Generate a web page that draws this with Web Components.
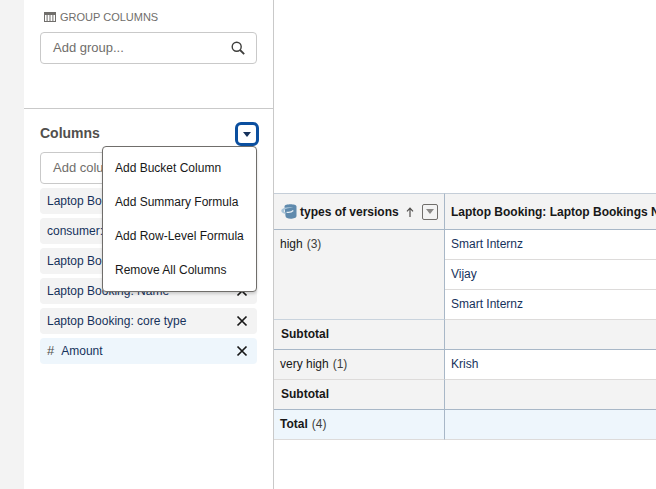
<!DOCTYPE html>
<html>
<head>
<meta charset="utf-8">
<title>Report builder</title>
<style>
  html, body { margin: 0; height: 100%; overflow: hidden; }
  body { font-family: "Liberation Sans", Arial, sans-serif; font-size: 12px; color: #181818; background: #f3f3f3; }
  #page { display: flex; height: 489px; width: 656px; overflow: hidden; }
</style>
</head>
<body>
<div id="page">
  <side-panel>
    <search-box placeholder="Add group..."></search-box>
  </side-panel>
  <report-table></report-table>
</div>

<script>
class SearchBox extends HTMLElement {
  constructor() {
    super();
    this.attachShadow({ mode: 'open' });
    this.shadowRoot.innerHTML = `
    <style>
      :host {
        display: flex;
        align-items: center;
        justify-content: space-between;
        height: 32px;
        box-sizing: border-box;
        padding: 0 11px 0 12px;
        background: #fff;
        border: 1px solid #c9c9c9;
        border-radius: 4px;
        color: #706e6b;
        font-size: 13px;
      }
      span { margin-top: -1px; }
      svg { width: 14px; height: 14px; display: block; }
    </style>
    <span>${this.getAttribute('placeholder')}</span>
    <svg viewBox="0 0 14 14" fill="none" stroke="#3e3e3c" stroke-width="1.4">
      <circle cx="5.7" cy="5.7" r="4.5"/>
      <path d="M9 9l4.2 4.2" stroke-width="1.8"/>
    </svg>
    `;
  }
}
customElements.define('search-box', SearchBox);

class ColumnPill extends HTMLElement {
  constructor() {
    super();
    this.attachShadow({ mode: 'open' });
    const hash = this.hasAttribute('numeric') ? '<i>#</i>' : '';
    this.shadowRoot.innerHTML = `
    <style>
      :host {
        display: flex;
        align-items: center;
        justify-content: space-between;
        height: 26px;
        box-sizing: border-box;
        padding: 0 9px 0 7px;
        background: #f3f3f3;
        border-radius: 4px;
        color: #16325c;
        font-size: 12px;
      }
      :host([numeric]) { background: #eef6fc; }
      i { font-style: normal; color: #514f4d; font-size: 13px; line-height: 1; margin-right: 7px; }
      span { white-space: nowrap; line-height: 14px; }
      svg { width: 12px; height: 12px; display: block; flex: none; }
    </style>
    <span>${hash}<slot></slot></span>
    <svg viewBox="0 0 12 12" fill="none" stroke="#181818" stroke-width="1.7">
      <path d="M1.5 1.5l9 9M10.5 1.5l-9 9"/>
    </svg>
    `;
  }
}
customElements.define('column-pill', ColumnPill);

class ActionMenu extends HTMLElement {
  constructor() {
    super();
    this.attachShadow({ mode: 'open' });
    this.shadowRoot.innerHTML = `
    <style>
      :host {
        position: absolute;
        left: 62px;
        top: -6px;
        width: 155px;
        height: 146px;
        box-sizing: border-box;
        padding: 4px 0;
        display: flex;
        flex-direction: column;
        background: #fff;
        border: 1px solid #706e6b;
        border-radius: 4px;
        box-shadow: 0 2px 3px rgba(0,0,0,.16);
        z-index: 2;
      }
      div {
        height: 34px;
        display: flex;
        align-items: center;
        padding-left: 12px;
        font-size: 12px;
        color: #181818;
        white-space: nowrap;
      }
    </style>
    <div>Add Bucket Column</div>
    <div>Add Summary Formula</div>
    <div>Add Row-Level Formula</div>
    <div>Remove All Columns</div>
    `;
  }
}
customElements.define('action-menu', ActionMenu);

class SidePanel extends HTMLElement {
  constructor() {
    super();
    this.attachShadow({ mode: 'open' });
    this.shadowRoot.innerHTML = `
    <style>
      :host {
        display: flex;
        flex-direction: column;
        flex: none;
        width: 250px;
        margin-left: 24px;
        box-sizing: border-box;
        border-right: 1px solid #c9c9c9;
        height: 489px;
        background: #fff;
        position: relative;
      }
      .group { height: 108px; box-sizing: border-box; padding: 11px 16px 0; }
      .label {
        display: flex;
        align-items: center;
        gap: 4px;
        height: 12px;
        margin-bottom: 9px;
        margin-left: 4px;
        font-size: 11px;
        color: #706e6b;
      }
      .label svg { width: 12px; height: 10px; display: block; }
      .columns { border-top: 1px solid #c9c9c9; padding: 0 16px; }
      .head {
        display: flex;
        align-items: center;
        justify-content: space-between;
        height: 28px;
        margin-top: 11px;
        margin-bottom: 4px;
      }
      h2 { margin: 0 0 2px; font-size: 14px; font-weight: 700; color: #514f4d; }
      .toggle {
        width: 24px;
        height: 24px;
        box-sizing: border-box;
        margin-right: -2px;
        border: 3px solid #0b4f9f;
        border-radius: 6px;
        background: #fff;
        display: flex;
        align-items: center;
        justify-content: center;
      }
      .toggle::after {
        content: "";
        border-left: 4.5px solid transparent;
        border-right: 4.5px solid transparent;
        border-top: 5px solid #16325c;
      }
      .body { position: relative; }
      .list { display: flex; flex-direction: column; gap: 4px; margin-top: 4px; }
    </style>
    <div class="group">
      <div class="label">
        <svg viewBox="0 0 12 10" fill="#706e6b">
          <path d="M0 0h12v10H0z M1 3v6h1.600V3z M3.600 3v6h1.900V3z M6.500 3v6h1.900V3z M9.400 3v6H11V3z" fill-rule="evenodd"/>
        </svg>
        GROUP COLUMNS
      </div>
      <slot></slot>
    </div>
    <div class="columns">
      <div class="head">
        <h2>Columns</h2>
        <div class="toggle"></div>
      </div>
      <div class="body">
        <action-menu></action-menu>
        <search-box placeholder="Add column..."></search-box>
        <div class="list">
          <column-pill>Laptop Booking: Laptop Bookings</column-pill>
          <column-pill>consumer: Laptop Booking</column-pill>
          <column-pill>Laptop Booking: Owner</column-pill>
          <column-pill>Laptop Booking: Name</column-pill>
          <column-pill>Laptop Booking: core type</column-pill>
          <column-pill numeric>Amount</column-pill>
        </div>
      </div>
    </div>
    `;
  }
}
customElements.define('side-panel', SidePanel);

class ReportTable extends HTMLElement {
  constructor() {
    super();
    this.attachShadow({ mode: 'open' });
    this.shadowRoot.innerHTML = `
    <style>
      :host {
        display: block;
        flex: 1;
        min-width: 0;
        height: 489px;
        box-sizing: border-box;
        padding-top: 193px;
        overflow: hidden;
        background: #fff;
        font-size: 12px;
        color: #181818;
      }
      .grid {
        display: grid;
        grid-template-columns: 171px 400px;
        grid-template-rows: 37px 30px 30px 30px 30px 30px 30px 30px;
        width: 571px;
      }
      .grid > div {
        box-sizing: border-box;
        display: flex;
        align-items: center;
        padding-left: 6px;
        padding-bottom: 2px;
        border-bottom: 1px solid #dddbda;
        white-space: nowrap;
      }
      .c1 { border-right: 1px solid #a8b7c7; background: #f3f3f3; }
      .c2 { color: #16325c; }
      .grid > .hd {
        border-top: 1px solid #c5ced8;
        border-bottom-color: #a8b7c7;
        background: #f3f3f3;
        font-weight: 700;
        padding-bottom: 0;
      }
      .grid > .hd.c1 { padding-left: 7px; }
      .grid > .merged { grid-row: span 3; align-items: flex-start; padding-top: 7px; border-bottom-color: #c9d3dd; }
      .sub { background: #f3f3f3; font-weight: 700; color: #181818; }
      .grid > .sub.first { padding-left: 7px; }
      .grid > .line { border-bottom-color: #a8b7c7; }
      .total { background: #eef6fc; font-weight: 700; color: #181818; }
      .count { font-weight: 400; margin-left: 4px; color: #3e3e3c; }
      .bucket { width: 16px; height: 15px; margin-right: 3px; flex: none; }
      .arrow { width: 8px; height: 10px; margin-left: 7px; flex: none; }
      .filter {
        width: 16px;
        height: 16px;
        box-sizing: border-box;
        margin-left: 8px;
        border: 1px solid #706e6b;
        border-radius: 2px;
        display: flex;
        align-items: center;
        justify-content: center;
        flex: none;
      }
      .filter::after {
        content: "";
        border-left: 4px solid transparent;
        border-right: 4px solid transparent;
        border-top: 5px solid #8a8886;
      }
    </style>
    <div class="grid">
      <div class="c1 hd">
        <svg class="bucket" viewBox="0 0 16 15">
          <path d="M3.500 2.500C3.500 1 6.500.3 9.500.3s6 .7 6 2.200v9.500c0 1.700-2.900 2.800-5.800 2.800-2.800 0-5.200-1-5.200-2.700z" fill="#5f8aad"/>
          <path d="M.3 6.800C.3 4.600 4 3.200 8 3.200c1.800 0 3.300.3 4.200.8-2.400-.2-8.700.2-9.200 2.500-.2 1 .6 1.800 1.500 2.100v1.500C2.300 9.600.3 8.500.3 6.800z" fill="#a9c4d8"/>
          <path d="M5.500 8.200c2.500.4 5.200 0 6.800-1.700" fill="none" stroke="#e8f0f6" stroke-width="1.100"/>
        </svg>
        types of versions
        <svg class="arrow" viewBox="0 0 8 10" fill="none" stroke="#514f4d" stroke-width="1.200"><path d="M4 10V1.500M1 4.300L4 1.200l3 3.100"/></svg>
        <span class="filter"></span>
      </div>
      <div class="hd">Laptop Booking: Laptop Bookings Name</div>

      <div class="c1 merged">high<span class="count">(3)</span></div>
      <div class="c2">Smart Internz</div>
      <div class="c2" style="grid-column:2">Vijay</div>
      <div class="c2" style="grid-column:2">Smart Internz</div>

      <div class="c1 sub first line">Subtotal</div>
      <div class="sub line"></div>

      <div class="c1">very high<span class="count">(1)</span></div>
      <div class="c2">Krish</div>

      <div class="c1 sub first line">Subtotal</div>
      <div class="sub line"></div>

      <div class="c1 total">Total<span class="count">(4)</span></div>
      <div class="total"></div>
    </div>
    `;
  }
}
customElements.define('report-table', ReportTable);
</script>
</body>
</html>
